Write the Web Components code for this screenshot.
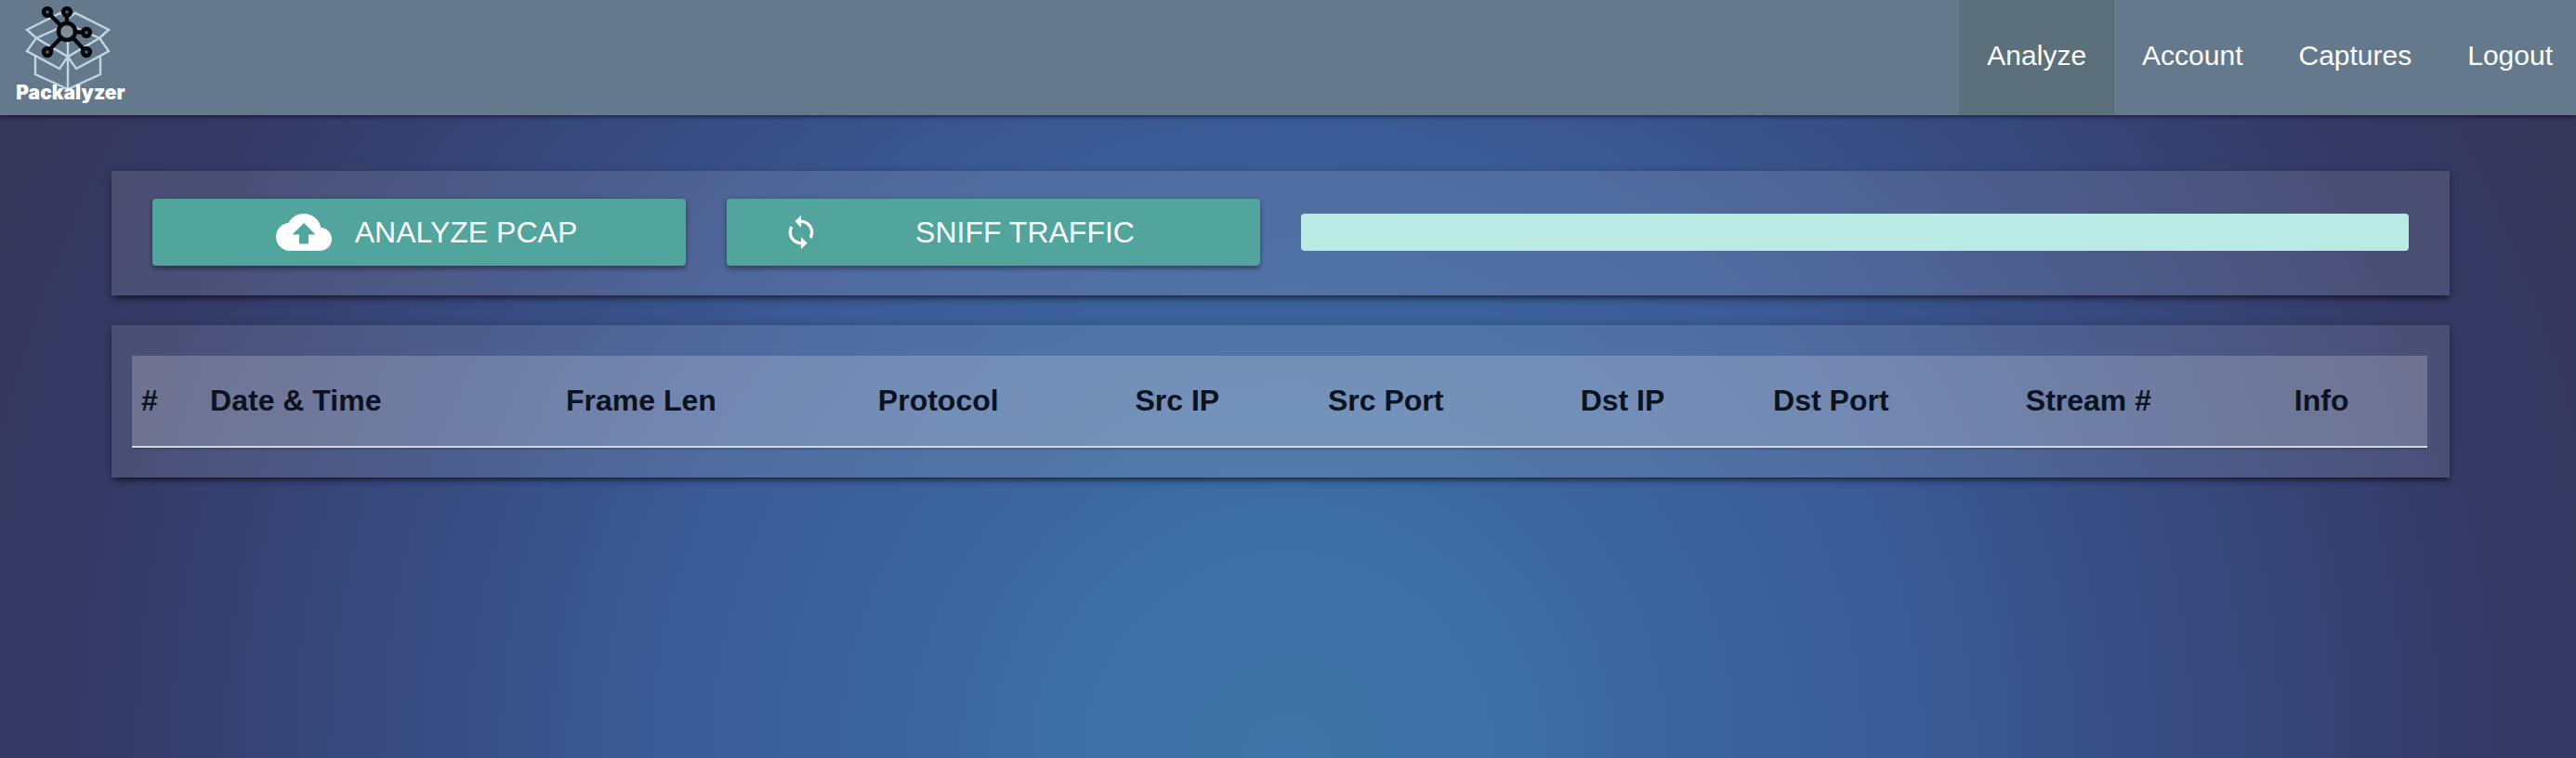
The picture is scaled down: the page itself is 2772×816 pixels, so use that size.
<!DOCTYPE html>
<html lang="en">
<head>
<meta charset="utf-8">
<title>Packalyzer</title>
<style>
  html, body { margin: 0; min-height: 100%; }
  body {
    min-height: 100vh;
    font-family: "Liberation Sans", Arial, sans-serif;
    color: #0b1220;
    background: radial-gradient(circle farthest-corner at 50% 100%, #3d73a6 0%, #3d71a5 12%, #3c659d 26%, #3b5b96 42%, #374b80 60%, #353a66 80%, #353555 100%);
  }
</style>
</head>
<body>
<packet-app></packet-app>
<script>
const define = (name, html) => {
  const template = document.createElement('template');
  template.innerHTML = html;
  customElements.define(name, class extends HTMLElement {
    constructor() {
      super();
      this.attachShadow({ mode: 'open' }).append(template.content.cloneNode(true));
    }
  });
};

define('brand-logo', `
  <style>
    :host { display: flex; flex-direction: column; align-items: center; width: 118px; color: #fff; }
    svg { display: block; width: 100px; height: 90px; overflow: visible; }
    b { font: 900 21px/20px "Inter", sans-serif; }
  </style>
  <svg viewBox="26 0 100 90" fill="none" aria-hidden="true">
    <g stroke="#c3d5e2" stroke-width="2.4">
      <path d="M65 14 29 32 39 41 29 55 64 74 73 61 82 74 117 55 107 41 117 32 81 14 73 20Z"/>
      <path d="M39 41 73 26 107 41M39 41 73 61 107 41"/>
      <path d="M38 61V80L73 96 108 80V61M73 26V96"/>
    </g>
    <g stroke="#04080c" stroke-width="4.4">
      <path d="M72 34 51 13M72 34V13M72 34 93 35M72 34 51 56M72 34 93 56"/>
      <g fill="#54636f">
        <circle cx="72" cy="34" r="9" fill="#7f8f99"/>
        <circle cx="51" cy="13" r="4"/><circle cx="72" cy="13" r="4"/>
        <circle cx="93" cy="35" r="4"/><circle cx="51" cy="56" r="4"/><circle cx="93" cy="56" r="4"/>
      </g>
    </g>
  </svg>
  <b>Packalyzer</b>`);

define('nav-link', `
  <style>
    :host { display: block; }
    :host([active]) { background: #5b707b; }
    :host(:last-of-type) { margin-right: -5px; }
    a { display: block; padding: 0 30px; font-size: 30px; line-height: 120px; height: 124px; color: #fff; text-decoration: none; }
  </style>
  <a href="#"><slot></slot></a>`);

define('top-bar', `
  <style>
    :host { display: block; overflow-x: clip; background: #647a8c; box-shadow: 0 2px 4px rgba(0,0,20,.5); }
    nav { display: flex; justify-content: space-between; height: 124px; }
    brand-logo { margin-left: 17px; }
    div { display: flex; }
  </style>
  <nav>
    <brand-logo></brand-logo>
    <div><slot></slot></div>
  </nav>`);

define('glass-panel', `
  <style>
    :host {
      display: flow-root;
      background: rgba(255,255,255,.11);
      box-shadow: 0 4px 5px rgba(0,0,0,.2), 0 2px 10px rgba(0,0,0,.24), 0 6px 4px -4px rgba(0,0,0,.3);
    }
  </style>
  <slot></slot>`);

define('action-button', `
  <style>
    :host { display: block; }
    button {
      display: flex; align-items: center; justify-content: center; gap: 25px;
      width: 100%; height: 72px; padding: 0 0 0 16px;
      border: 0; border-radius: 4px; background: #51a59c; color: #fff;
      font: 32px/37px "Liberation Sans", Arial, sans-serif; text-transform: uppercase;
      box-shadow: 0 4px 4px rgba(0,0,0,.24), 0 1px 6px rgba(0,0,0,.2);
    }
    :host([spread]) button { gap: 0; padding: 0 32px 0 60px; }
    :host([spread]) span { flex: 1; text-align: center; }
  </style>
  <button type="button"><slot name="icon"></slot><span><slot></slot></span></button>`);

define('transfer-progress', `
  <style>
    :host { display: block; }
    div { height: 40px; border-radius: 4px; background: #b9ebe4; }
  </style>
  <div role="progressbar" aria-label="Capture progress" aria-valuenow="0"></div>`);

define('packet-table', `
  <style>
    :host { display: block; }
    table {
      width: 100%; table-layout: fixed; border-collapse: collapse;
      background: rgba(255,255,255,.2);
      box-shadow: 0 2px 2px rgba(0,0,0,.14);
    }
    thead { border-bottom: 2px solid #d0d8e4; }
    th { padding: 30px 10px; font-size: 32px; line-height: 37px; text-align: left; white-space: nowrap; }
  </style>
  <table>
    <colgroup>
      <col style="width:3%"><col style="width:15.5%"><col style="width:13.6%"><col style="width:11.2%"><col style="width:8.4%">
      <col style="width:11%"><col style="width:8.4%"><col style="width:11%"><col style="width:11.7%"><col style="width:6.2%">
    </colgroup>
    <thead><tr>
      <th>#</th><th>Date &amp; Time</th><th>Frame Len</th><th>Protocol</th><th>Src IP</th>
      <th>Src Port</th><th>Dst IP</th><th>Dst Port</th><th>Stream #</th><th>Info</th>
    </tr></thead>
  </table>`);

define('packet-app', `
  <style>
    :host { display: block; }
    main { display: grid; gap: 32px; padding: 60px 136px 60px 120px; }
    .tools { display: grid; grid-template-columns: repeat(4, 1fr); gap: 44px; align-items: center; padding: 30px 44px 32px; }
    transfer-progress { grid-column: span 2; }
    packet-table { margin: 33px 24px 32px 22px; }
    svg { display: block; fill: #fff; }
    .cloud { width: 60px; height: 60px; }
    .sync { width: 40px; height: 40px; }
  </style>
  <top-bar>
    <nav-link active>Analyze</nav-link>
    <nav-link>Account</nav-link>
    <nav-link>Captures</nav-link>
    <nav-link>Logout</nav-link>
  </top-bar>
  <main>
    <glass-panel>
      <div class="tools">
        <action-button>
          <svg slot="icon" class="cloud" viewBox="0 0 24 24" aria-hidden="true"><path d="M19.35 10.04C18.67 6.59 15.64 4 12 4 9.11 4 6.6 5.64 5.35 8.04 2.34 8.36 0 10.91 0 14c0 3.31 2.69 6 6 6h13c2.76 0 5-2.24 5-5 0-2.64-2.05-4.78-4.65-4.96zM14 13v4h-4v-4H7l5-5 5 5h-3z"/></svg>
          Analyze PCAP
        </action-button>
        <action-button spread>
          <svg slot="icon" class="sync" viewBox="0 0 24 24" aria-hidden="true"><path d="M12 4V1L8 5l4 4V6c3.31 0 6 2.69 6 6 0 1.01-.25 1.97-.7 2.8l1.46 1.46C19.54 15.03 20 13.57 20 12c0-4.42-3.58-8-8-8zm0 14c-3.31 0-6-2.69-6-6 0-1.01.25-1.97.7-2.8L5.24 7.74C4.46 8.97 4 10.43 4 12c0 4.42 3.58 8 8 8v3l4-4-4-4v3z"/></svg>
          Sniff Traffic
        </action-button>
        <transfer-progress></transfer-progress>
      </div>
    </glass-panel>
    <glass-panel>
      <packet-table></packet-table>
    </glass-panel>
  </main>`);
</script>
</body>
</html>
